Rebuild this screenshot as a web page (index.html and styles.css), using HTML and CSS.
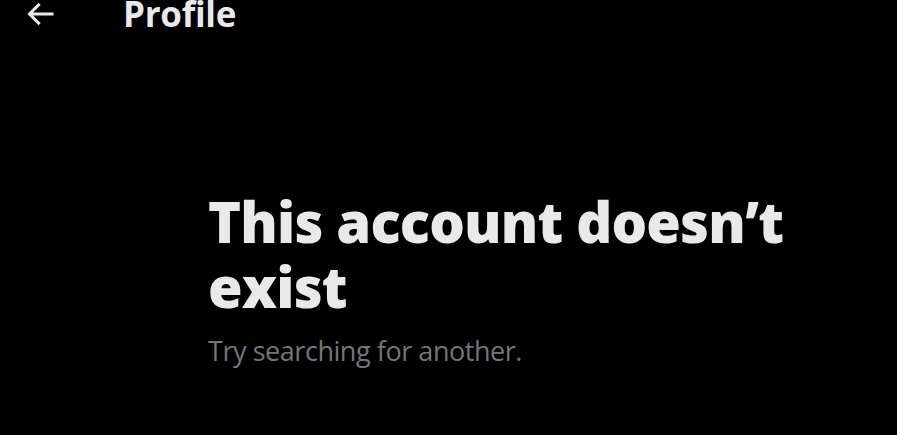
FILE: index.html
```html
<!DOCTYPE html>
<html lang="en">
<head>
<meta charset="utf-8">
<title>Profile</title>
<link rel="stylesheet" href="styles.css">
</head>
<body>
<header class="topbar">
  <button class="back" aria-label="Back">
    <svg viewBox="0 0 24 24" class="back-icon"><path d="M7.414 13l5.043 5.04-1.414 1.42L3.586 12l7.457-7.46 1.414 1.42L7.414 11H21v2H7.414z"/></svg>
  </button>
  <h2 class="title">Profile</h2>
</header>
<main class="empty">
  <div class="empty-inner">
    <h1 class="empty-title">This account doesn’t exist</h1>
    <p class="empty-sub">Try searching for another.</p>
  </div>
</main>
</body>
</html>
```
FILE: styles.css
```css
html, body {
  margin: 0;
  padding: 0;
  background: #000;
  color: #e7e9ea;
  font-family: "Open Sans", "Noto Sans", sans-serif;
}
body {
  width: 897px;
  height: 435px;
  overflow: hidden;
}
.topbar {
  display: flex;
  align-items: center;
  height: 28px;
  padding-left: 22px;
}
.back {
  width: 36px;
  height: 28px;
  padding: 0;
  border: 0;
  background: none;
  display: flex;
  align-items: center;
  justify-content: center;
  color: #e7e9ea;
}
.back-icon {
  flex: none;
  width: 36px;
  height: 36px;
  fill: currentColor;
}
.title {
  margin: 0 0 0 65px;
  font-size: 35px;
  font-weight: 700;
  line-height: 28px;
  letter-spacing: -0.3px;
}
.empty {
  padding: 161px 0 0 208px;
}
.empty-inner {
  width: 600px;
}
.empty-title {
  margin: 0;
  font-size: 56px;
  line-height: 65px;
  font-weight: 800;
  letter-spacing: -0.8px;
}
.empty-sub {
  margin: 14px 0 0;
  font-size: 27px;
  line-height: 36px;
  color: #71767b;
  letter-spacing: -0.45px;
}
```
